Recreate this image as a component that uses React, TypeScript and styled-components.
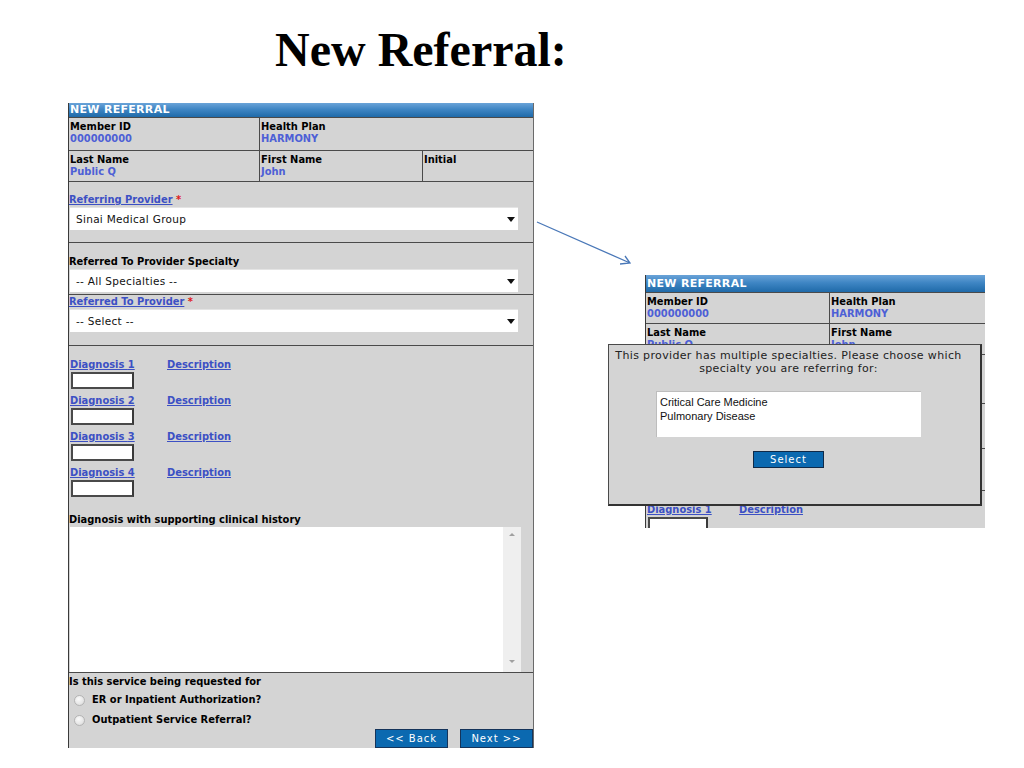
import styled, { createGlobalStyle } from 'styled-components';

const GlobalStyle = createGlobalStyle`
  body {
    margin: 0;
    background: #fff;
  }
`;

const ui = `"DejaVu Sans Condensed", "DejaVu Sans", Verdana, sans-serif`;
const wide = `"DejaVu Sans", Verdana, sans-serif`;

const App = () => {
  return (
    <>
      <GlobalStyle />
      <Page>
        <Title>New Referral:</Title>
        <Content>
          <Form>
            <Header $h={14}>NEW REFERRAL</Header>
            <InfoRow $cols='190px 163px 1fr' $h={32}>
              <Cell>
                <Label>Member ID</Label>
                <Value>000000000</Value>
              </Cell>
              <Cell>
                <Label>Health Plan</Label>
                <Value>HARMONY</Value>
              </Cell>
            </InfoRow>
            <InfoRow $cols='190px 163px 1fr' $h={30}>
              <Cell>
                <Label>Last Name</Label>
                <Value>Public Q</Value>
              </Cell>
              <Cell>
                <Label>First Name</Label>
                <Value>John</Value>
              </Cell>
              <Cell>
                <Label>Initial</Label>
              </Cell>
            </InfoRow>

            <Section $top={12} $bottom={12}>
              <FieldLabel>
                <Link>Referring Provider</Link> <Req>*</Req>
              </FieldLabel>
              <Select>
                Sinai Medical Group
                <Caret />
              </Select>
            </Section>
            <Section $top={13} $bottom={2}>
              <FieldLabel>Referred To Provider Specialty</FieldLabel>
              <Select>
                -- All Specialties --
                <Caret />
              </Select>
            </Section>
            <Section $top={1} $bottom={13}>
              <FieldLabel>
                <Link>Referred To Provider</Link> <Req>*</Req>
              </FieldLabel>
              <Select>
                -- Select --
                <Caret />
              </Select>
            </Section>

            <Section $top={13} $bottom={0}>
              {[1, 2, 3, 4].map((n) => (
                <DiagBlock key={n}>
                  <DiagRow>
                    <DiagLabel>
                      <Link>Diagnosis {n}</Link>
                    </DiagLabel>
                    <Link>Description</Link>
                  </DiagRow>
                  <CodeInput />
                </DiagBlock>
              ))}
              <HistoryLabel>Diagnosis with supporting clinical history</HistoryLabel>
              <TextBox>
                <ScrollBar>
                  <ScrollArrow $up />
                  <ScrollArrow />
                </ScrollBar>
              </TextBox>
            </Section>

            <Bottom>
              <FieldLabel>Is this service being requested for</FieldLabel>
              <RadioList>
                <RadioRow>
                  <Radio />
                  ER or Inpatient Authorization?
                </RadioRow>
                <RadioRow>
                  <Radio />
                  Outpatient Service Referral?
                </RadioRow>
              </RadioList>
              <Buttons>
                <NavBtn>&lt;&lt; Back</NavBtn>
                <NavBtn>Next &gt;&gt;</NavBtn>
              </Buttons>
            </Bottom>
          </Form>

          <ArrowCol>
            <svg width='111' height='60' viewBox='0 0 111 60'>
              <path
                d='M3 7 L96 48 M91 41 L96 48 L86 49'
                fill='none'
                stroke='#4a78b8'
                strokeWidth='1.3'
              />
            </svg>
          </ArrowCol>

          <RightPanel>
            <MiniForm>
              <Header $h={17}>NEW REFERRAL</Header>
              <InfoRow $cols='183px 1fr' $h={30}>
                <Cell>
                  <Label>Member ID</Label>
                  <Value>000000000</Value>
                </Cell>
                <Cell>
                  <Label>Health Plan</Label>
                  <Value>HARMONY</Value>
                </Cell>
              </InfoRow>
              <InfoRow $cols='183px 1fr' $h={30}>
                <Cell>
                  <Label>Last Name</Label>
                  <Value>Public Q</Value>
                </Cell>
                <Cell>
                  <Label>First Name</Label>
                  <Value>John</Value>
                </Cell>
              </InfoRow>
              <MiniSection $h={48} />
              <MiniSection $h={44} />
              <MiniSection $h={41} />
              <Section $top={13} $bottom={0}>
                <DiagRow>
                  <MiniDiagLabel>
                    <Link>Diagnosis 1</Link>
                  </MiniDiagLabel>
                  <Link>Description</Link>
                </DiagRow>
                <CodeInput $w={60} />
              </Section>
            </MiniForm>

            <Dialog>
              <DialogText>
                This provider has multiple specialties. Please choose which
                <br />
                specialty you are referring for:
              </DialogText>
              <ListBox>
                <ListItem>Critical Care Medicine</ListItem>
                <ListItem>Pulmonary Disease</ListItem>
              </ListBox>
              <SelectBtn>Select</SelectBtn>
            </Dialog>
          </RightPanel>
        </Content>
      </Page>
    </>
  );
};

export default App;

const Page = styled.div`
  width: 1024px;
  height: 768px;
  overflow: hidden;
`;

const Title = styled.h1`
  margin: 26px 0 0 275px;
  font-family: 'Liberation Serif', 'Times New Roman', serif;
  font-weight: bold;
  font-size: 48px;
  line-height: 48px;
  color: #000;
`;

const Content = styled.div`
  display: flex;
  align-items: flex-start;
  margin-top: 29px;
  padding-left: 68px;
`;

const Form = styled.div`
  width: 466px;
  box-sizing: border-box;
  background: #d4d4d4;
  border-left: 1px solid #3a3a3a;
  border-right: 1px solid #6a6a6a;
  font-family: ${ui};
  font-size: 11px;
  line-height: 12px;
`;

const Header = styled.div<{ $h: number }>`
  height: ${(p) => p.$h}px;
  line-height: ${(p) => p.$h}px;
  padding-left: 1px;
  background: linear-gradient(to bottom, #6aa3d8 0%, #3f86c4 45%, #1f6aa9 100%);
  color: #fff;
  font-family: ${wide};
  font-weight: bold;
  font-size: 11px;
  letter-spacing: 0.3px;
`;

const InfoRow = styled.div<{ $cols: string; $h: number }>`
  display: grid;
  grid-template-columns: ${(p) => p.$cols};
  height: ${(p) => p.$h}px;
  border-top: 1px solid #4a4a4a;
  border-bottom: 1px solid #4a4a4a;
  & + & {
    border-top: none;
  }
`;

const Cell = styled.div`
  padding: 3px 0 0 1px;
  & + & {
    border-left: 1px solid #4a4a4a;
  }
`;

const Label = styled.div`
  font-weight: bold;
  color: #000;
`;

const Value = styled.div`
  font-weight: bold;
  color: #4d5fd6;
`;

const Section = styled.div<{ $top: number; $bottom: number }>`
  padding-top: ${(p) => p.$top}px;
  padding-bottom: ${(p) => p.$bottom}px;
  border-bottom: 1px solid #4a4a4a;
`;

const MiniSection = styled.div<{ $h: number }>`
  height: ${(p) => p.$h}px;
  border-bottom: 1px solid #4a4a4a;
`;

const FieldLabel = styled.div`
  height: 12px;
  font-weight: bold;
  color: #000;
`;

const Link = styled.span`
  color: #3c50c4;
  text-decoration: underline;
  font-weight: bold;
`;

const Req = styled.span`
  color: #e01818;
`;

const Select = styled.div`
  position: relative;
  width: 448px;
  height: 23px;
  margin: 1px 0 0 1px;
  box-sizing: border-box;
  border-top: 1px solid #e4e4e4;
  background: #fff;
  display: flex;
  align-items: center;
  padding-left: 6px;
  font-family: ${wide};
  font-size: 10.5px;
  color: #111;
  letter-spacing: 0.3px;
`;

const Caret = styled.span`
  position: absolute;
  right: 3px;
  top: 9px;
  width: 0;
  height: 0;
  border-left: 4px solid transparent;
  border-right: 4px solid transparent;
  border-top: 5px solid #111;
`;

const DiagBlock = styled.div`
  margin-bottom: 6px;
`;

const DiagRow = styled.div`
  display: flex;
  align-items: baseline;
  height: 12px;
`;

const DiagLabel = styled.div`
  width: 97px;
  padding-left: 1px;
`;

const MiniDiagLabel = styled.div`
  width: 92px;
  padding-left: 1px;
`;

const CodeInput = styled.div<{ $w?: number }>`
  width: ${(p) => p.$w ?? 63}px;
  height: 17px;
  margin: 1px 0 0 2px;
  box-sizing: border-box;
  background: #fff;
  border: 2px solid #4a4a4a;
  border-right-color: #3a3a3a;
`;

const HistoryLabel = styled(FieldLabel)`
  margin-top: 17px;
`;

const TextBox = styled.div`
  width: 451px;
  height: 145px;
  margin: 1px 0 0 1px;
  background: #fff;
  display: flex;
  justify-content: flex-end;
`;

const ScrollBar = styled.div`
  width: 18px;
  background: #efefef;
  display: flex;
  flex-direction: column;
  justify-content: space-between;
  align-items: center;
  padding: 6px 0 9px;
  box-sizing: border-box;
`;

const ScrollArrow = styled.span<{ $up?: boolean }>`
  width: 0;
  height: 0;
  border-left: 3px solid transparent;
  border-right: 3px solid transparent;
  ${(p) =>
    p.$up ? 'border-bottom: 3px solid #a0a0a0;' : 'border-top: 3px solid #a0a0a0;'}
`;

const Bottom = styled.div`
  padding-top: 3px;
`;

const RadioList = styled.div`
  margin-top: 2px;
`;

const RadioRow = styled.div`
  height: 20px;
  display: flex;
  align-items: center;
  gap: 7px;
  padding-left: 5px;
  font-weight: bold;
  color: #000;
`;

const Radio = styled.span`
  width: 11px;
  height: 11px;
  box-sizing: border-box;
  border-radius: 50%;
  border: 1px solid #b4b4b4;
  background: radial-gradient(circle at 40% 35%, #fafafa 0%, #e6e6e6 60%, #d0d0d0 100%);
`;

const Buttons = styled.div`
  display: flex;
  justify-content: flex-end;
  gap: 12px;
  margin-top: -1px;
`;

const NavBtn = styled.button`
  width: 73px;
  height: 19px;
  padding: 0;
  box-sizing: border-box;
  border: 1px solid #15345a;
  background: #0b69b0;
  color: #fff;
  font-family: ${wide};
  font-size: 10px;
  letter-spacing: 1px;
  cursor: pointer;
`;

const ArrowCol = styled.div`
  width: 111px;
  padding-top: 112px;
  & svg {
    display: block;
  }
`;

const RightPanel = styled.div`
  position: relative;
  width: 340px;
  margin-top: 172px;
`;

const MiniForm = styled.div`
  height: 253px;
  overflow: hidden;
  background: #d4d4d4;
  border-left: 1px solid #3a3a3a;
  font-family: ${ui};
  font-size: 11px;
  line-height: 12px;
`;

const Dialog = styled.div`
  position: absolute;
  left: -37px;
  top: 69px;
  width: 374px;
  height: 162px;
  box-sizing: border-box;
  padding: 4px 12px 0 0;
  background: #d4d4d4;
  border: 1px solid #4a4a4a;
  border-right: 2px solid #333;
  border-bottom: 2px solid #333;
  display: flex;
  flex-direction: column;
  align-items: center;
  font-family: ${wide};
`;

const DialogText = styled.div`
  font-size: 11px;
  line-height: 13px;
  color: #222;
  text-align: center;
  white-space: nowrap;
  letter-spacing: 0.35px;
`;

const ListBox = styled.div`
  width: 265px;
  height: 46px;
  margin-top: 16px;
  box-sizing: border-box;
  padding: 3px 3px 0;
  background: #fff;
  border-top: 1px solid #bdbdbd;
  border-left: 1px solid #bdbdbd;
`;

const ListItem = styled.div`
  font-family: 'Liberation Sans', Arial, sans-serif;
  font-size: 11px;
  line-height: 14px;
  color: #111;
`;

const SelectBtn = styled.button`
  width: 71px;
  height: 17px;
  margin-top: 14px;
  padding: 0;
  box-sizing: border-box;
  border: 1px solid #102a48;
  background: #0b69b0;
  color: #fff;
  font-family: ${wide};
  font-size: 10px;
  letter-spacing: 1px;
`;
